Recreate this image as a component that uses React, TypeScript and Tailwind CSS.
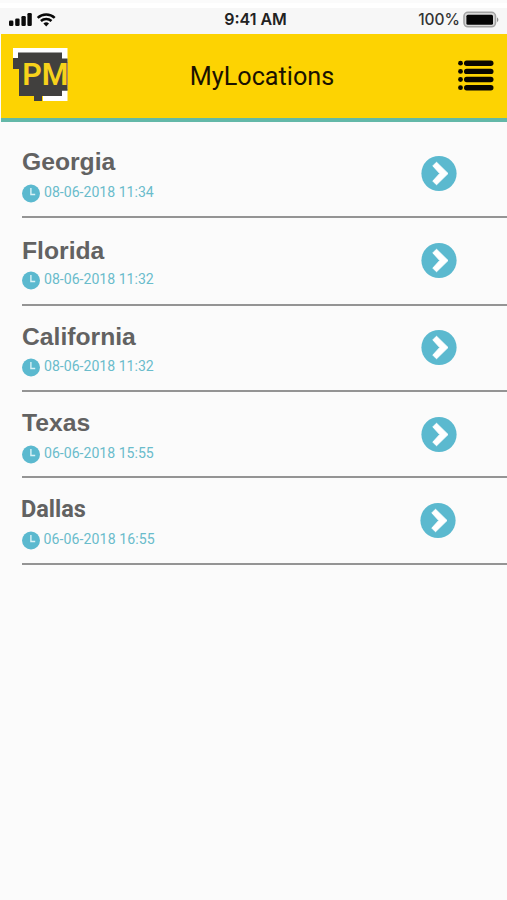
interface Location {
  name: string
  date: string
  row: string
  title: string
  stamp: string
  button: string
}

const locations: Location[] = [
  {
    name: "Georgia",
    date: "08-06-2018 11:34",
    row: "h-[96px] pt-[26px]",
    title: "font-['Liberation_Sans',sans-serif] text-[24.7px]",
    stamp: "mt-[7px]",
    button: "mt-[7px] mr-[50px]",
  },
  {
    name: "Florida",
    date: "08-06-2018 11:32",
    row: "h-[88px] pt-[19px]",
    title: "font-['Liberation_Sans',sans-serif] text-[24.7px]",
    stamp: "mt-[5px]",
    button: "mt-[5px] mr-[50px]",
  },
  {
    name: "California",
    date: "08-06-2018 11:32",
    row: "h-[86px] pt-[17px]",
    title: "font-['Liberation_Sans',sans-serif] text-[24.7px]",
    stamp: "mt-[6px]",
    button: "mt-[6px] mr-[50px]",
  },
  {
    name: "Texas",
    date: "06-06-2018 15:55",
    row: "h-[86px] pt-[17px]",
    title: "font-['Liberation_Sans',sans-serif] text-[24.7px]",
    stamp: "mt-[7px]",
    button: "mt-[7px] mr-[50px]",
  },
  {
    name: "Dallas",
    date: "06-06-2018 16:55",
    row: "h-[87px] pt-[17px]",
    title: "font-[Roboto,sans-serif] text-[23.5px] -ml-[1px]",
    stamp: "mt-[7px] -ml-[0.5px] tracking-[0.1px]",
    button: "mt-[7px] mr-[51px]",
  },
]

function StatusBar() {
  return (
    <div className="flex h-[34px] flex-col bg-[#fbfbfb]">
      <div className="mt-[3px] h-[5px] bg-white" />
      <div className="grid flex-1 grid-cols-3 items-center bg-[#f7f7f7] pr-[7px] pl-[9px] pb-[3px]">
        <svg width="48" height="16" viewBox="0 0 48 16" fill="#0a0a0a">
          <rect x="0" y="8.5" width="4.4" height="5.5" rx="1.3" />
          <rect x="6.2" y="6.5" width="4.4" height="7.5" rx="1.3" />
          <rect x="12.4" y="4" width="4.4" height="10" rx="1.3" />
          <rect x="18.4" y="1" width="4.4" height="13" rx="1.3" />
          <g fill="none" stroke="#0a0a0a" strokeWidth="2.5">
            <path d="M28.7 5.8a12.3 12.3 0 0 1 17 0" />
            <path d="M31.9 9a7.8 7.8 0 0 1 10.6 0" />
          </g>
          <path d="M37.2 14.5l-2.8-3a4.2 4.2 0 0 1 5.6 0z" />
        </svg>
        <span className="mb-px ml-[2px] text-center font-[Inter,sans-serif] text-[16px] leading-none font-semibold text-[#222]">
          9:41 AM
        </span>
        <div className="flex items-center justify-end gap-[3px]">
          <span className="font-[Inter,sans-serif] text-[15.5px] leading-none font-medium text-[#333]">100%</span>
          <svg width="37" height="18" viewBox="0 0 37 18">
            <rect x="1" y="1.3" width="31.5" height="14.5" rx="4" fill="#d8d8d8" stroke="#a3a3a3" strokeWidth="1.6" />
            <rect x="3.4" y="3.7" width="26.6" height="10" rx="1.5" fill="#050505" />
            <path d="M34 6.2q2.8 2.5 0 5z" fill="#8c8c8c" />
          </svg>
        </div>
      </div>
    </div>
  )
}

function Logo() {
  return (
    <svg width="58" height="56" viewBox="0 0 58 56">
      <path d="M1 0h54.5v53h-24.5v-5h18v-43h-43v5h-5z" fill="#fff" />
      <path
        d="M6 4.5h44v6h5.500v4h-3.500v27h3.500v1h-5.500v5.500h-20v5h-8v-5h-15v-27h-6v-11h5z"
        fill="#41403e"
      />
      <path d="M50 14h5.5v28.5h-5.5z" fill="#41403e" />
      <text
        x="10.2"
        y="37"
        fontFamily="Roboto, sans-serif"
        fontWeight="600"
        fontSize="30.500"
        fill="#f7d21b"
      >
        PM
      </text>
    </svg>
  )
}

function MenuIcon() {
  return (
    <svg width="36" height="32" viewBox="0 0 36 32" fill="#090600">
      {[3.2, 11.4, 19.5, 27.7].map((y) => (
        <g key={y}>
          <circle cx="2.5" cy={y} r="2.4" />
          <rect x="6" y={y - 2.7} width="29.5" height="5.4" rx="2.7" />
        </g>
      ))}
    </svg>
  )
}

function Header() {
  return (
    <header className="ml-px grid h-[88px] grid-cols-[1fr_auto_1fr] items-center border-b-4 border-[#63b8a8] bg-[#fdd302] pr-[13px] pl-[11px]">
      <Logo />
      <h1 className="mt-[2px] ml-[18px] font-[Roboto,sans-serif] text-[25.2px] leading-none text-[#1a1200]">
        MyLocations
      </h1>
      <button className="justify-self-end" aria-label="Menu">
        <MenuIcon />
      </button>
    </header>
  )
}

function LocationRow({ location }: { location: Location }) {
  return (
    <li className={`flex justify-between border-b-2 border-[#949494] ${location.row}`}>
      <div>
        <h2 className={`leading-[28px] font-bold text-[#626262] ${location.title}`}>{location.name}</h2>
        <div className={`flex items-start gap-[4px] ${location.stamp}`}>
          <svg width="18" height="19" viewBox="0 0 18 19" className="mt-px">
            <circle cx="9" cy="9.5" r="9" fill="#5bb9cf" />
            <path d="M8.9 4v6.5h4.3" fill="none" stroke="#d9f2f6" strokeWidth="1.4" />
          </svg>
          <span className="font-[Roboto,sans-serif] text-[14.1px] leading-[19px] text-[#6abccb]">{location.date}</span>
        </div>
      </div>
      <button className={`h-[37px] w-[36px] ${location.button}`} aria-label={`Open ${location.name}`}>
        <svg width="36" height="37" viewBox="0 0 36 37">
          <circle cx="18" cy="18.5" r="17.6" fill="#5bb9cf" />
          <path
            d="M15.5 7.2l11.5 11.3l-11.5 11.3l-3.7-3.7l7-7.6l-7-7.6z"
            fill="#fff"
            stroke="#fff"
            strokeLinejoin="round"
          />
        </svg>
      </button>
    </li>
  )
}

export default function App() {
  return (
    <div className="min-h-[900px] w-full bg-[#fbfbfb]">
      <StatusBar />
      <Header />
      <ul className="pl-[22px]">
        {locations.map((location) => (
          <LocationRow key={location.name} location={location} />
        ))}
      </ul>
    </div>
  )
}
